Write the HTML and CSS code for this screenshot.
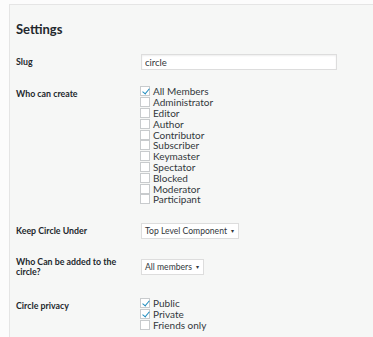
FILE: index.html
```html
<!DOCTYPE html>
<html lang="en">
<head>
    <meta charset="UTF-8">
    <title>Settings</title>
    <link rel="stylesheet" href="styles.css">
</head>
<body>
    <div class="panel">
        <h2>Settings</h2>
        <div class="form-row slug-row">
            <div class="label">Slug</div>
            <div class="field"><input type="text" class="text-input" value="circle"></div>
        </div>
        <div class="form-row top">
            <div class="label">Who can create</div>
            <div class="field">
                <ul class="check-list">
                    <li><span class="box checked"></span>All Members</li>
                    <li><span class="box"></span>Administrator</li>
                    <li><span class="box"></span>Editor</li>
                    <li><span class="box"></span>Author</li>
                    <li><span class="box"></span>Contributor</li>
                    <li><span class="box"></span>Subscriber</li>
                    <li><span class="box"></span>Keymaster</li>
                    <li><span class="box"></span>Spectator</li>
                    <li><span class="box"></span>Blocked</li>
                    <li><span class="box"></span>Moderator</li>
                    <li><span class="box"></span>Participant</li>
                </ul>
            </div>
        </div>
        <div class="form-row">
            <div class="label">Keep Circle Under</div>
            <div class="field"><span class="select">Top Level Component<i class="caret">&#9662;</i></span></div>
        </div>
        <div class="form-row">
            <div class="label">Who Can be added to the circle?</div>
            <div class="field"><span class="select">All members<i class="caret">&#9662;</i></span></div>
        </div>
        <div class="form-row top privacy-row">
            <div class="label">Circle privacy</div>
            <div class="field">
                <ul class="check-list">
                    <li><span class="box checked"></span>Public</li>
                    <li><span class="box checked"></span>Private</li>
                    <li><span class="box"></span>Friends only</li>
                </ul>
            </div>
        </div>
    </div>
</body>
</html>
```

FILE: styles.css
```css
/* страница */
body {
    font-family: 'Lato', 'Open Sans', sans-serif;
    margin: 0;
    padding: 4px 0 0 9px;
    background-color: #fcfcfc;
    color: #32373c;
    font-size: 10px;
    overflow: hidden;
}

.panel {
    box-sizing: border-box;
    background-color: #f6f7f6;
    border-top: 1px solid #e5e5e5;
    border-left: 1px solid #e5e5e5;
    padding: 15px 0 0 6px;
    height: 333px;
    overflow: hidden;
}

h2 {
    margin: 0 0 16px 0;
    font-size: 13px;
    font-weight: bold;
    color: #23282d;
    line-height: 18px;
}

.form-row {
    display: grid;
    grid-template-columns: 125px 200px;
    align-items: center;
    margin-bottom: 18px;
}

.slug-row {
    margin-bottom: 16px;
}

.privacy-row {
    margin-top: 21px;
}

.form-row.top {
    align-items: start;
}

.label {
    font-weight: bold;
    font-size: 8.8px;
    color: #23282d;
    line-height: 10px;
    width: 110px;
}

.form-row.top .label {
    padding-top: 3px;
}

.text-input {
    box-sizing: border-box;
    width: 196px;
    height: 16px;
    border: 1px solid #dddddd;
    box-shadow: inset 0 1px 2px rgba(0, 0, 0, 0.07);
    font-family: inherit;
    font-size: 9.5px;
    color: #32373c;
    padding: 0 3px;
    margin: 0;
    background-color: #fff;
}

.check-list {
    list-style: none;
    margin: 0;
    padding: 0;
}

.check-list li {
    display: flex;
    align-items: center;
    gap: 3px;
    height: 10.8px;
    margin-left: -1px;
}

.box {
    box-sizing: border-box;
    width: 10px;
    height: 10px;
    border: 1px solid #c8cbcd;
    background-color: #fff;
    position: relative;
    flex: none;
}

.box.checked::after {
    content: "";
    position: absolute;
    left: 2.5px;
    top: 0px;
    width: 3px;
    height: 6px;
    border-right: 1.5px solid #1e8cbe;
    border-bottom: 1.5px solid #1e8cbe;
    transform: rotate(40deg);
}

.select {
    display: inline-flex;
    align-items: center;
    height: 16px;
    box-sizing: border-box;
    border: 1px solid #dddddd;
    background-color: #fff;
    padding: 0 4px 0 3px;
    font-size: 8.6px;
    color: #32373c;
}

.caret {
    font-style: normal;
    font-size: 6px;
    margin-left: 4px;
}
```
